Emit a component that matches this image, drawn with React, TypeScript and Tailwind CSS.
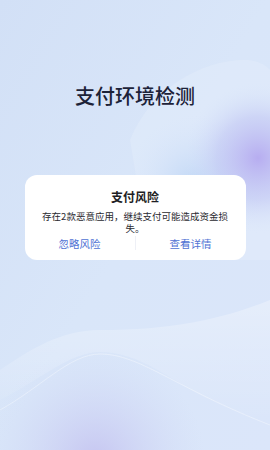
import React from 'react';

const cjk = { fontFamily: '"Noto Sans CJK SC", "Noto Sans", sans-serif' };

function Backdrop() {
  return (
    <svg className="absolute inset-0" width="270" height="450" viewBox="0 0 270 450">
      <defs>
        <linearGradient id="base" x1="0" y1="0" x2="1" y2="1">
          <stop offset="0" stopColor="#d2e0f6" />
          <stop offset="0.5" stopColor="#d9e6f9" />
          <stop offset="1" stopColor="#dbe6fa" />
        </linearGradient>
        <radialGradient id="violet" cx="258" cy="158" r="75" gradientUnits="userSpaceOnUse">
          <stop offset="0" stopColor="#b5aaf0" stopOpacity="0.95" />
          <stop offset="0.55" stopColor="#bcc0f2" stopOpacity="0.5" />
          <stop offset="1" stopColor="#d8e5fa" stopOpacity="0" />
        </radialGradient>
        <radialGradient id="blue" cx="195" cy="185" r="70" gradientUnits="userSpaceOnUse">
          <stop offset="0" stopColor="#b8d2f4" stopOpacity="0.8" />
          <stop offset="1" stopColor="#d8e5fa" stopOpacity="0" />
        </radialGradient>
        <radialGradient id="bottom" cx="95" cy="460" r="110" gradientUnits="userSpaceOnUse">
          <stop offset="0" stopColor="#c4c2f0" stopOpacity="0.9" />
          <stop offset="1" stopColor="#d0d9f5" stopOpacity="0" />
        </radialGradient>
        <linearGradient id="hill" x1="0" y1="0" x2="0" y2="1">
          <stop offset="0" stopColor="#ffffff" stopOpacity="0.3" />
          <stop offset="1" stopColor="#ffffff" stopOpacity="0" />
        </linearGradient>
      </defs>
      <rect width="270" height="450" fill="url(#base)" />
      <path d="M130 140 C150 90 200 60 245 60 C262 60 270 70 270 70 L270 260 L150 260 Z" fill="#ffffff" opacity="0.15" />
      <rect width="270" height="450" fill="url(#blue)" />
      <rect width="270" height="450" fill="url(#violet)" />
      <rect width="270" height="450" fill="url(#bottom)" />
      <path d="M0 400 C40 380 70 352 100 352 C140 352 170 380 210 400 C240 414 260 420 270 422 L270 300 C220 320 170 330 100 330 C60 330 30 350 0 370 Z" fill="url(#hill)" />
      <path d="M0 410 C40 388 70 354 100 354 C140 354 175 388 270 425" stroke="#ffffff" strokeOpacity="0.35" strokeWidth="1" fill="none" />
    </svg>
  );
}

export default function App() {
  return (
    <div className="relative w-[270px] h-[450px] overflow-hidden" style={cjk}>
      <Backdrop />
      <div className="relative flex flex-col items-center">
        <h1 className="mt-[82px] text-[20px] leading-[28px] font-medium text-[#1c2238]">
          支付环境检测
        </h1>

        <div className="mt-[65px] w-[221px] bg-white rounded-[12px] px-[16px] pt-[14px] pb-[10px] flex flex-col items-center">
          <h2 className="text-[12px] leading-[16px] font-semibold text-[#1e1e24]">支付风险</h2>
          <p className="mt-[5px] text-[9.5px] leading-[12px] text-[#2a2a30] text-center">
            存在2款恶意应用，继续支付可能造成资金损失。
          </p>
          <div className="self-stretch -mx-[16px] mt-[2px] flex items-center">
            <button className="flex-1 text-[10.5px] leading-[13px] text-[#4f72d4] text-center">忽略风险</button>
            <div className="w-px h-[14px] bg-[#eef0f6]" />
            <button className="flex-1 text-[10.5px] leading-[13px] text-[#4f72d4] text-center">查看详情</button>
          </div>
        </div>
      </div>
    </div>
  );
}
